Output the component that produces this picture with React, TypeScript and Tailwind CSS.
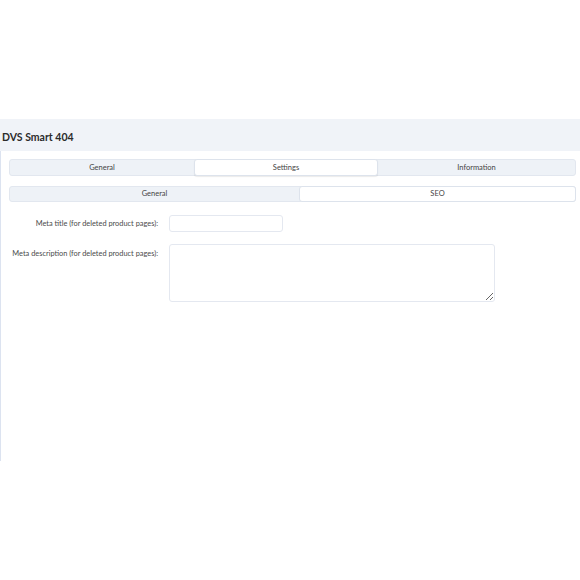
import React from "react";

export default function App() {
  const font = { fontFamily: 'Lato, "Open Sans", sans-serif' };
  return (
    <div className="w-[580px] h-[580px] bg-white pt-[119px]" style={font}>
      <div className="h-[32px] bg-[#f0f3f8] pl-[2px] pt-[12px] flex items-start">
        <span className="block text-[10.5px] leading-[13px] font-bold text-[#2b2b2b]">DVS Smart 404</span>
      </div>
      <div className="h-[310px] border-l border-[#dce3f0] pt-[8px] pl-[8px] pr-[4px]">
        <div className="flex h-[17px] bg-[#eef2f7] border border-[#e2e7ef] rounded-[3px] text-[7.5px] text-[#444]">
          <div className="w-[184px] flex items-center justify-center">General</div>
          <div className="w-[184px] flex items-center justify-center bg-white border border-[#dde3ec] rounded-[3px] shadow-[0_1px_1px_rgba(0,0,0,0.08)] -my-px">Settings</div>
          <div className="flex-1 flex items-center justify-center">Information</div>
        </div>
        <div className="flex h-[16px] mt-[10px] bg-[#eef2f7] border border-[#e2e7ef] rounded-[3px] text-[7.5px] text-[#444]">
          <div className="w-[289px] flex items-center justify-center">General</div>
          <div className="flex-1 flex items-center justify-center bg-white border border-[#dde3ec] rounded-[3px] -my-px -mr-px">SEO</div>
        </div>
        <div className="flex items-center mt-[13px] -ml-[9px]">
          <label className="w-[158px] text-right text-[7.4px] text-[#4a4a4a]">Meta title (for deleted product pages):</label>
          <input className="ml-[11px] w-[114px] h-[17px] border border-[#e4e8f0] rounded-[3px] bg-white outline-none" />
        </div>
        <div className="flex items-start mt-[12px] -ml-[9px]">
          <label className="w-[158px] text-right text-[7.4px] text-[#4a4a4a] pt-[4px]">Meta description (for deleted product pages):</label>
          <textarea className="ml-[11px] w-[326px] h-[58px] border border-[#e4e8f0] rounded-[3px] bg-white outline-none" />
        </div>
      </div>
    </div>
  );
}
